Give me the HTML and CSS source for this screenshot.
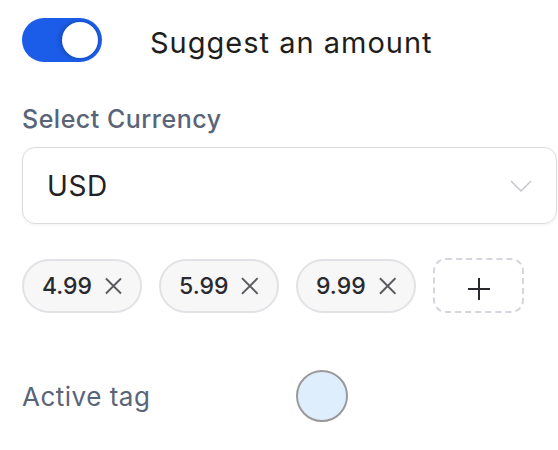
FILE: index.html
```html
<!DOCTYPE html>
<html>
<head>
<meta charset="utf-8">
<link rel="stylesheet" href="styles.css">
</head>
<body>
<div class="panel">
  <div class="toggle-row">
    <span class="toggle"><span class="knob"></span></span>
    <span class="toggle-label">Suggest an amount</span>
  </div>

  <div class="field-label">Select Currency</div>
  <div class="select">
    <span class="select-value">USD</span>
    <svg class="chevron" width="22" height="12" viewBox="0 0 22 12"><path d="M1 1 L11 11 L21 1" fill="none" stroke="#c4c4c8" stroke-width="1.4"/></svg>
  </div>

  <div class="chips">
    <span class="chip">4.99<svg class="x" width="18" height="18" viewBox="0 0 18 18"><path d="M1 1 L17 17 M17 1 L1 17" stroke="#5a5a5e" stroke-width="2"/></svg></span>
    <span class="chip">5.99<svg class="x" width="18" height="18" viewBox="0 0 18 18"><path d="M1 1 L17 17 M17 1 L1 17" stroke="#5a5a5e" stroke-width="2"/></svg></span>
    <span class="chip">9.99<svg class="x" width="18" height="18" viewBox="0 0 18 18"><path d="M1 1 L17 17 M17 1 L1 17" stroke="#5a5a5e" stroke-width="2"/></svg></span>
    <span class="add"><svg width="24" height="24" viewBox="0 0 24 24"><path d="M12 1 V23 M1 12 H23" stroke="#2a2a2e" stroke-width="2"/></svg></span>
  </div>

  <div class="active-row">
    <span class="active-label">Active tag</span>
    <span class="swatch"></span>
  </div>
</div>
</body>
</html>
```

FILE: styles.css
```css
html, body {
  margin: 0;
  padding: 0;
  background: #ffffff;
}
body {
  font-family: Inter, "Noto Sans", "Liberation Sans", sans-serif;
}
.panel {
  padding: 18px 1px 0 22px;
}
.toggle-row {
  display: flex;
  align-items: center;
  gap: 48px;
  height: 44px;
}
.toggle {
  width: 80px;
  height: 44px;
  border-radius: 22px;
  background: #1b5de8;
  display: flex;
  align-items: center;
  justify-content: flex-end;
  padding-right: 4px;
  box-sizing: border-box;
}
.knob {
  width: 36px;
  height: 36px;
  border-radius: 50%;
  background: #ffffff;
  box-shadow: 0 0 0 1px #1750cc, -2px 0 4px rgba(10, 30, 90, 0.35);
}
.toggle-label {
  font-size: 29px;
  color: #1e1e20;
  letter-spacing: 1px;
  padding-top: 5px;
}
.field-label {
  margin-top: 42px;
  font-size: 25px;
  line-height: 30px;
  color: #5a6478;
  font-weight: 500;
  letter-spacing: 0.5px;
}
.select {
  margin-top: 13px;
  height: 77px;
  border: 1.5px solid #dcdce0;
  border-radius: 13px;
  box-sizing: border-box;
  display: flex;
  align-items: center;
  justify-content: space-between;
  padding: 0 24px 0 24px;
  box-shadow: 0 1px 3px rgba(0, 0, 0, 0.06);
}
.select-value {
  font-size: 28px;
  color: #222226;
  letter-spacing: 0.6px;
}
.chevron {
  display: block;
}
.chips {
  margin-top: 34px;
  display: flex;
  gap: 17px;
  align-items: center;
}
.chip {
  height: 54px;
  box-sizing: border-box;
  border: 2px solid #e2e2e6;
  background: #f7f7f8;
  border-radius: 27px;
  display: flex;
  align-items: center;
  gap: 13px;
  padding: 0 18px 0 18px;
  font-size: 23px;
  font-weight: 500;
  color: #2a2a2e;
  width: 120px;
}
.x {
  display: block;
}
.add {
  width: 91px;
  height: 55px;
  box-sizing: border-box;
  border: 2px dashed #d3d6de;
  border-radius: 13px;
  display: flex;
  align-items: center;
  justify-content: center;
  padding-top: 6px;
}
.active-row {
  margin-top: 57px;
  display: flex;
  align-items: center;
  height: 52px;
}
.active-label {
  width: 274px;
  font-size: 26px;
  color: #5a6478;
  letter-spacing: 0.5px;
}
.swatch {
  width: 52px;
  height: 52px;
  box-sizing: border-box;
  border-radius: 50%;
  background: #deeefc;
  border: 2px solid #9a9a9c;
}
```
